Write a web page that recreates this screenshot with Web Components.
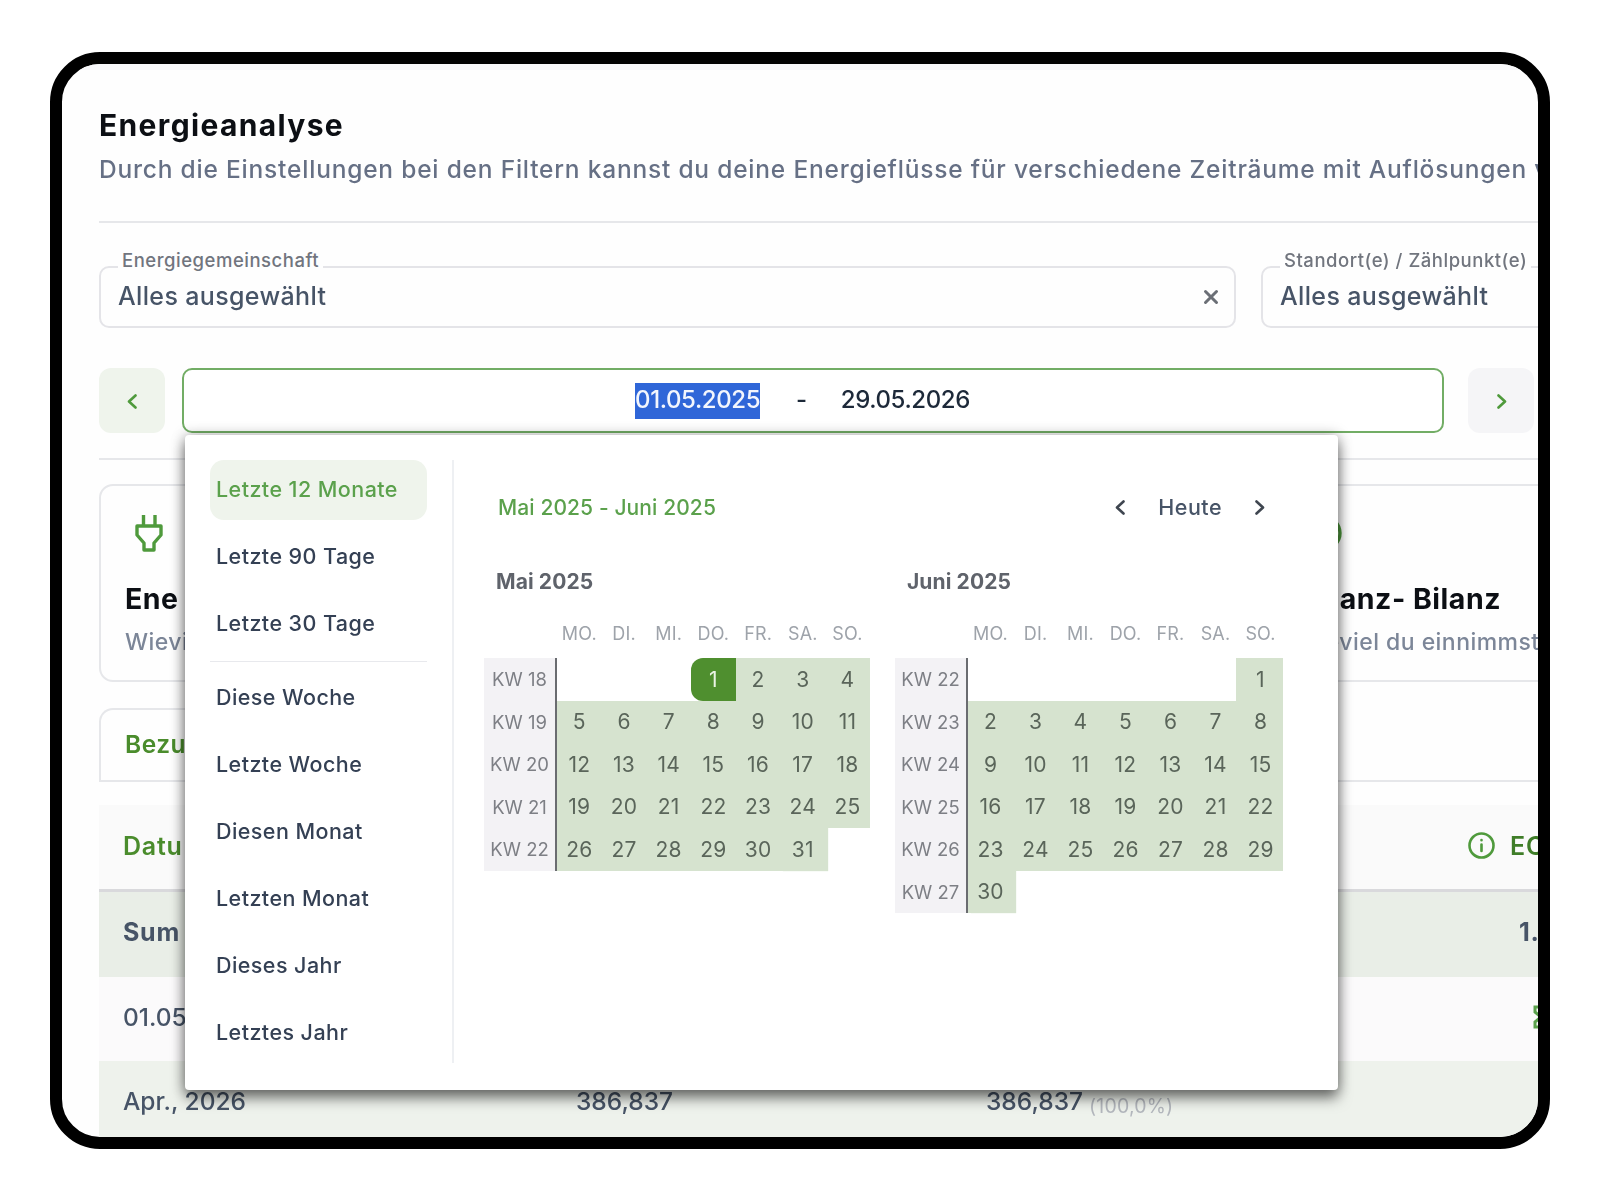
<!DOCTYPE html>
<html lang="de">
<head>
<meta charset="utf-8">
<title>Energieanalyse</title>
<style>
  html, body { margin: 0; background: #fff; }
  body { font-family: Inter, "Liberation Sans", sans-serif; color: #344054; letter-spacing: .03em; }
  data-row small { font-size: 19.5px; color: #b3b7bd; margin-left: 6px; position: relative; top: 3px; letter-spacing: .01em; font-weight: 400; }
</style>
</head>
<body>
<app-frame>
  <page-head heading="Energieanalyse" text="Durch die Einstellungen bei den Filtern kannst du deine Energieflüsse für verschiedene Zeiträume mit Auflösungen v"></page-head>
  <filter-row>
    <select-field label="Energiegemeinschaft" value="Alles ausgewählt" clearable style="width:1137px"></select-field>
    <select-field label="Standort(e) / Zählpunkt(e)" value="Alles ausgewählt" style="width:420px"></select-field>
  </filter-row>
  <date-range from="01.05.2025" to="29.05.2026"></date-range>
  <card-row>
    <stat-card heading="Ene" text="Wievi" icon="plug"></stat-card>
    <stat-card></stat-card>
    <stat-card heading="Finanz- Bilanz" text="Wieviel du einnimmst" icon="ring"></stat-card>
  </card-row>
  <tab-bar label="Bezu"></tab-bar>
  <data-table>
    <data-row tone="head"><span>Datu</span><span></span><span></span><info-label text="EC"></info-label></data-row>
    <data-row tone="sum"><span>Sum</span><span></span><span></span><span class="end">1.9</span></data-row>
    <data-row tone="plain"><span>01.05</span><span></span><span></span><row-mark></row-mark></data-row>
    <data-row tone="alt"><span>Apr., 2026</span><span>386,837</span><span>386,837<small>(100,0%)</small></span><span></span></data-row>
  </data-table>
</app-frame>

<script>
const chevron = (dir, color, w = 10, h = 15, sw = 2.6) => {
  const d = dir === 'left' ? `M${w - 1.5} 1.5 L2 ${h / 2} L${w - 1.5} ${h - 1.5}` : `M1.5 1.5 L${w - 2} ${h / 2} L1.5 ${h - 1.5}`;
  return `<svg width="${w}" height="${h}" viewBox="0 0 ${w} ${h}" fill="none" stroke="${color}" stroke-width="${sw}" stroke-linecap="round" stroke-linejoin="round"><path d="${d}"/></svg>`;
};

class AppFrame extends HTMLElement {
  constructor() {
    super();
    this.attachShadow({ mode: 'open' }).innerHTML = `
      <style>
        :host { display: block; box-sizing: border-box; width: 1500px; height: 1097px; margin: 52px 0 0 50px; border: 12px solid #000; border-radius: 50px; overflow: hidden; background: #fefefe; filter: blur(.35px); }
        main { width: 1700px; padding: 37px 0 0 37px; border-top: 6px solid #f7f7f9; }
      </style>
      <main><slot></slot></main>`;
  }
}

class PageHead extends HTMLElement {
  constructor() {
    super();
    this.attachShadow({ mode: 'open' }).innerHTML = `
      <style>
        :host { display: block; width: 1500px; border-bottom: 2px solid #e6e7ea; padding-bottom: 36px; }
        h1 { margin: 0; font-size: 30px; line-height: 36px; font-weight: 700; color: #0c0f14; letter-spacing: .045em; }
        p { margin: 10px 0 0; font-size: 24.5px; line-height: 32px; font-weight: 500; color: #667085; white-space: nowrap; letter-spacing: .0325em; }
      </style>
      <h1>${this.getAttribute('heading')}</h1>
      <p>${this.getAttribute('text')}</p>`;
  }
}

class FilterRow extends HTMLElement {
  constructor() {
    super();
    this.attachShadow({ mode: 'open' }).innerHTML = `
      <style>:host { display: flex; gap: 25px; margin-top: 43px; }</style>
      <slot></slot>`;
  }
}

class SelectField extends HTMLElement {
  constructor() {
    super();
    const clear = this.hasAttribute('clearable')
      ? `<svg class="x" width="16" height="16" viewBox="0 0 16 16" stroke="#6b6f76" stroke-width="3" stroke-linecap="round"><path d="M2.5 2.5 L13.5 13.5 M13.5 2.5 L2.5 13.5"/></svg>` : '';
    this.attachShadow({ mode: 'open' }).innerHTML = `
      <style>
        :host { display: flex; align-items: center; justify-content: space-between; box-sizing: border-box; position: relative; height: 62px; padding: 0 15px 0 17px; border: 2px solid #e4e4e8; border-radius: 10px; flex: none; }
        label { position: absolute; left: 17px; top: -19px; padding: 0 4px; background: #fefefe; font-size: 18.5px; line-height: 22px; font-weight: 500; color: #71757e; letter-spacing: .028em; }
        span { font-size: 25px; font-weight: 500; color: #475467; letter-spacing: .014em; position: relative; top: -1px; }
      </style>
      <label>${this.getAttribute('label')}</label>
      <span>${this.getAttribute('value')}</span>${clear}`;
  }
}

class DateRange extends HTMLElement {
  constructor() {
    super();
    this.attachShadow({ mode: 'open' }).innerHTML = `
      <style>
        :host { display: block; position: relative; z-index: 5; width: 1500px; margin-top: 40px; padding-bottom: 25px; border-bottom: 2px solid #e6e7ea; }
        .row { display: flex; align-items: center; width: 1435px; height: 65px; gap: 17px; }
        button { flex: none; display: flex; align-items: center; justify-content: center; width: 66px; height: 65px; padding: 1px 0 0; border: 0; border-radius: 12px; background: #eff4ec; }
        button.next { background: #f5f5f7; margin-left: 7px; padding-left: 2px; }
        .input { flex: 1; box-sizing: border-box; height: 65px; display: flex; align-items: center; justify-content: center; gap: 34px; padding-right: 21px; border: 2px solid #72ad65; border-radius: 10px; background: #fff; font-size: 24px; font-weight: 500; color: #1d2939; letter-spacing: -.4px; }
        .input span { position: relative; top: -1px; }
        .input .sel { top: 0; box-sizing: border-box; display: flex; align-items: center; height: 36px; margin-right: 2px; padding-bottom: 2px; background: #2f66d8; color: #f3f6fd; }
        date-popover { position: absolute; left: 86px; top: 67px; }
      </style>
      <div class="row">
        <button>${chevron('left', '#4f9a3c')}</button>
        <div class="input"><span class="sel">${this.getAttribute('from')}</span><span>-</span><span>${this.getAttribute('to')}</span></div>
        <button class="next">${chevron('right', '#4f9a3c')}</button>
      </div>
      <date-popover></date-popover>`;
  }
}

class DatePopover extends HTMLElement {
  constructor() {
    super();
    this.attachShadow({ mode: 'open' }).innerHTML = `
      <style>
        :host { display: flex; box-sizing: border-box; width: 1153px; height: 655px; padding: 25px 0 27px 25px; background: #fff; border-radius: 4px; box-shadow: 0 8px 14px rgba(0,0,0,.5), 0 0 14px rgba(0,0,0,.28); }
        .side { width: 242px; box-sizing: content-box; border-right: 2px solid #eef0f3; flex: none; }
        .body { padding-left: 30px; }
        header { display: flex; align-items: center; justify-content: space-between; width: 767px; height: 28px; margin: 33px 0 47px 14px; font-size: 21.5px; font-weight: 500; }
        .range { color: #5ba14c; font-size: 21px; letter-spacing: .1px; }
        nav { display: flex; align-items: center; color: #475467; gap: 33px; }
        .months { display: flex; gap: 23px; align-items: flex-start; }
      </style>
      <div class="side"><preset-list></preset-list></div>
      <div class="body">
        <header>
          <span class="range">Mai 2025 - Juni 2025</span>
          <nav>${chevron('left', '#3f4650')}<span>Heute</span>${chevron('right', '#3f4650')}</nav>
        </header>
        <div class="months">
          <calendar-month name="Mai 2025" week="18" lead="3" days="31" picked="1" style="--cell:44.7px"></calendar-month>
          <calendar-month name="Juni 2025" week="22" lead="6" days="30"></calendar-month>
        </div>
      </div>`;
  }
}

class PresetList extends HTMLElement {
  constructor() {
    super();
    const groups = [['Letzte 12 Monate', 'Letzte 90 Tage', 'Letzte 30 Tage'],
      ['Diese Woche', 'Letzte Woche', 'Diesen Monat', 'Letzten Monat', 'Dieses Jahr', 'Letztes Jahr']];
    const item = t => `<li class="${t === 'Letzte 12 Monate' ? 'active' : ''}">${t}</li>`;
    this.attachShadow({ mode: 'open' }).innerHTML = `
      <style>
        :host { display: block; width: 217px; }
        ul { list-style: none; margin: 0; padding: 0; }
        li { box-sizing: border-box; height: 60px; margin-bottom: 7px; padding: 0 0 2px 6px; display: flex; align-items: center; border-radius: 14px; font-size: 21.5px; font-weight: 500; color: #344054; letter-spacing: .02em; white-space: nowrap; }
        .active { background: #eff4ec; color: #5ba14c; }
        hr { height: 1px; margin: 0 0 6px; border: 0; background: #e8e9ed; }
      </style>
      <ul>${groups[0].map(item).join('')}</ul><hr><ul>${groups[1].map(item).join('')}</ul>`;
  }
}

class CalendarMonth extends HTMLElement {
  constructor() {
    super();
    const lead = +this.getAttribute('lead');
    const days = +this.getAttribute('days');
    const picked = +this.getAttribute('picked');
    let week = +this.getAttribute('week');
    const heads = ['MO.', 'DI.', 'MI.', 'DO.', 'FR.', 'SA.', 'SO.'].map(d => `<div class="wd">${d}</div>`).join('');
    let cells = '';
    for (let i = 0, rows = Math.ceil((lead + days) / 7); i < rows * 7; i++) {
      if (i % 7 === 0) cells += `<div class="kw">KW ${week++}</div>`;
      const d = i - lead + 1;
      if (d < 1 || d > days) cells += '<div></div>';
      else if (d === picked) cells += `<div class="day picked">${d}</div>`;
      else cells += `<div class="day${d === days ? ' last' : ''}${d === 1 ? ' first' : ''}">${d}</div>`;
    }
    this.attachShadow({ mode: 'open' }).innerHTML = `
      <style>
        :host { display: block; width: 388px; }
        h3 { margin: 0 0 26px 12px; font-size: 21px; line-height: 28px; font-weight: 700; color: #5f636b; letter-spacing: .1px; }
        .grid { display: grid; grid-template-columns: 73px repeat(7, var(--cell, 45px)); grid-template-rows: 36px; grid-auto-rows: 42.5px; }
        .wd { height: 36px; line-height: 24px; text-align: center; font-size: 18px; color: #9ea3aa; letter-spacing: .01em; }
        .wd:first-child { grid-column: 2; }
        .kw { box-sizing: border-box; display: flex; align-items: center; justify-content: center; background: #f3f2f5; border-right: 2px solid #6a6c70; font-size: 18.5px; color: #7d7f85; letter-spacing: 0; }
        .day { display: flex; align-items: center; justify-content: center; background: #d6e3cf; font-size: 21px; color: #5a655a; letter-spacing: .01em; }
        .last { box-shadow: 3px 0 1px #d6e3cf; }
        .first { box-shadow: -2px 0 0 #d6e3cf; }
        .picked { background: #4f8f2f; color: #eaf3e5; border-radius: 12px 0 0 12px; }
      </style>
      <h3>${this.getAttribute('name')}</h3>
      <div class="grid">${heads}${cells}</div>`;
  }
}

class CardRow extends HTMLElement {
  constructor() {
    super();
    this.attachShadow({ mode: 'open' }).innerHTML = `
      <style>:host { display: grid; grid-template-columns: 572.5px 572.5px 500px; gap: 13px; margin-top: 24px; }</style>
      <slot></slot>`;
  }
}

class StatCard extends HTMLElement {
  constructor() {
    super();
    const icons = {
      plug: `<svg class="plug" width="28" height="37" viewBox="0 0 28 37" fill="none" stroke="#4f9a3c" stroke-width="3.4" stroke-linejoin="round"><path d="M8.5 0 V11 M20 0 V11 M2 11 H26 V20 L19 28 V35 H9 V28 L2 20 Z"/></svg>`,
      ring: `<svg class="ring" width="36" height="36" viewBox="0 0 36 36" fill="none" stroke="#4f9a3c" stroke-width="3.4"><circle cx="18" cy="18" r="16"/></svg>`
    };
    const kind = this.getAttribute('icon');
    this.attachShadow({ mode: 'open' }).innerHTML = `
      <style>
        :host { display: block; box-sizing: border-box; height: 198px; padding: 29px 0 0 24px; border: 2px solid #e6e7ea; border-radius: 14px; white-space: nowrap; overflow: hidden; }
        .icon { height: 37px; padding-left: 10px; margin-bottom: 27px; }
        h2 { margin: 0; font-size: 28.5px; line-height: 40px; font-weight: 700; color: #0c0f14; letter-spacing: .018em; }
        p { margin: 9px 0 0; font-size: 23px; line-height: 28px; font-weight: 500; color: #7c8698; letter-spacing: .02em; }
      </style>
      <div class="icon">${icons[kind] || ''}</div>
      <h2>${this.getAttribute('heading') || ''}</h2>
      <p>${this.getAttribute('text') || ''}</p>`;
  }
}

class TabBar extends HTMLElement {
  constructor() {
    super();
    this.attachShadow({ mode: 'open' }).innerHTML = `
      <style>
        :host { display: block; box-sizing: border-box; width: 1500px; height: 74px; margin-top: 26px; border-bottom: 2px solid #e6e7ea; }
        div { box-sizing: border-box; width: 200px; height: 72px; display: flex; align-items: center; padding: 0 0 3px 24px; border: 2px solid #e6e7ea; border-bottom: 0; border-radius: 14px 14px 0 0; font-size: 24.5px; font-weight: 600; color: #4a8c2c; letter-spacing: .02em; }
      </style>
      <div>${this.getAttribute('label')}</div>`;
  }
}

class DataTable extends HTMLElement {
  constructor() {
    super();
    this.attachShadow({ mode: 'open' }).innerHTML = `
      <style>:host { display: block; width: 1500px; margin-top: 23px; }</style>
      <slot></slot>`;
  }
}

class DataRow extends HTMLElement {
  constructor() {
    super();
    this.attachShadow({ mode: 'open' }).innerHTML = `
      <style>
        :host { display: grid; grid-template-columns: 453px 410px 481px 200px; align-items: center; box-sizing: border-box; padding-left: 24px; height: 84px; font-size: 24.5px; font-weight: 500; color: #475467; letter-spacing: 0; white-space: nowrap; }
        :host([tone=head]) { height: 87px; padding-bottom: 3px; background: #fafafa; border-bottom: 3px solid #d9d9dc; font-weight: 600; color: #4a8c2c; font-size: 25px; letter-spacing: .03em; }
        :host([tone=sum]) { height: 85px; padding-bottom: 6px; background: #e9eee7; font-weight: 700; color: #475467; font-size: 25px; letter-spacing: .03em; }
        :host([tone=plain]) { background: #fbfafb; padding-bottom: 4px; }
        :host([tone=alt]) { background: #eef2ec; padding-bottom: 4px; }
        ::slotted(.end) { padding-left: 52px; }
      </style>
      <slot></slot>`;
  }
}

class InfoLabel extends HTMLElement {
  constructor() {
    super();
    this.attachShadow({ mode: 'open' }).innerHTML = `
      <style>
        :host { display: flex; align-items: center; gap: 15px; margin-left: 1px; color: #3f7d28; }
      </style>
      <svg width="27" height="27" viewBox="0 0 27 27" fill="none" stroke="#4f9a3c" stroke-width="2.6" stroke-linecap="round"><circle cx="13.5" cy="13.5" r="12"/><path d="M13.5 12.5 V19 M13.5 8 V8.2"/></svg>
      <span>${this.getAttribute('text')}</span>`;
  }
}

class RowMark extends HTMLElement {
  constructor() {
    super();
    this.attachShadow({ mode: 'open' }).innerHTML = `
      <style>:host { display: block; padding-left: 66px; height: 24px; }</style>
      <svg width="18" height="24" viewBox="0 0 18 24" fill="none" stroke="#5ba14c" stroke-width="3"><path d="M2 2 H16 V7 L10 12 L16 17 V22 H2 V17 L8 12 L2 7 Z"/></svg>`;
  }
}

customElements.define('app-frame', AppFrame);
customElements.define('page-head', PageHead);
customElements.define('filter-row', FilterRow);
customElements.define('select-field', SelectField);
customElements.define('date-range', DateRange);
customElements.define('date-popover', DatePopover);
customElements.define('preset-list', PresetList);
customElements.define('calendar-month', CalendarMonth);
customElements.define('card-row', CardRow);
customElements.define('stat-card', StatCard);
customElements.define('tab-bar', TabBar);
customElements.define('data-table', DataTable);
customElements.define('data-row', DataRow);
customElements.define('info-label', InfoLabel);
customElements.define('row-mark', RowMark);
</script>
</body>
</html>
